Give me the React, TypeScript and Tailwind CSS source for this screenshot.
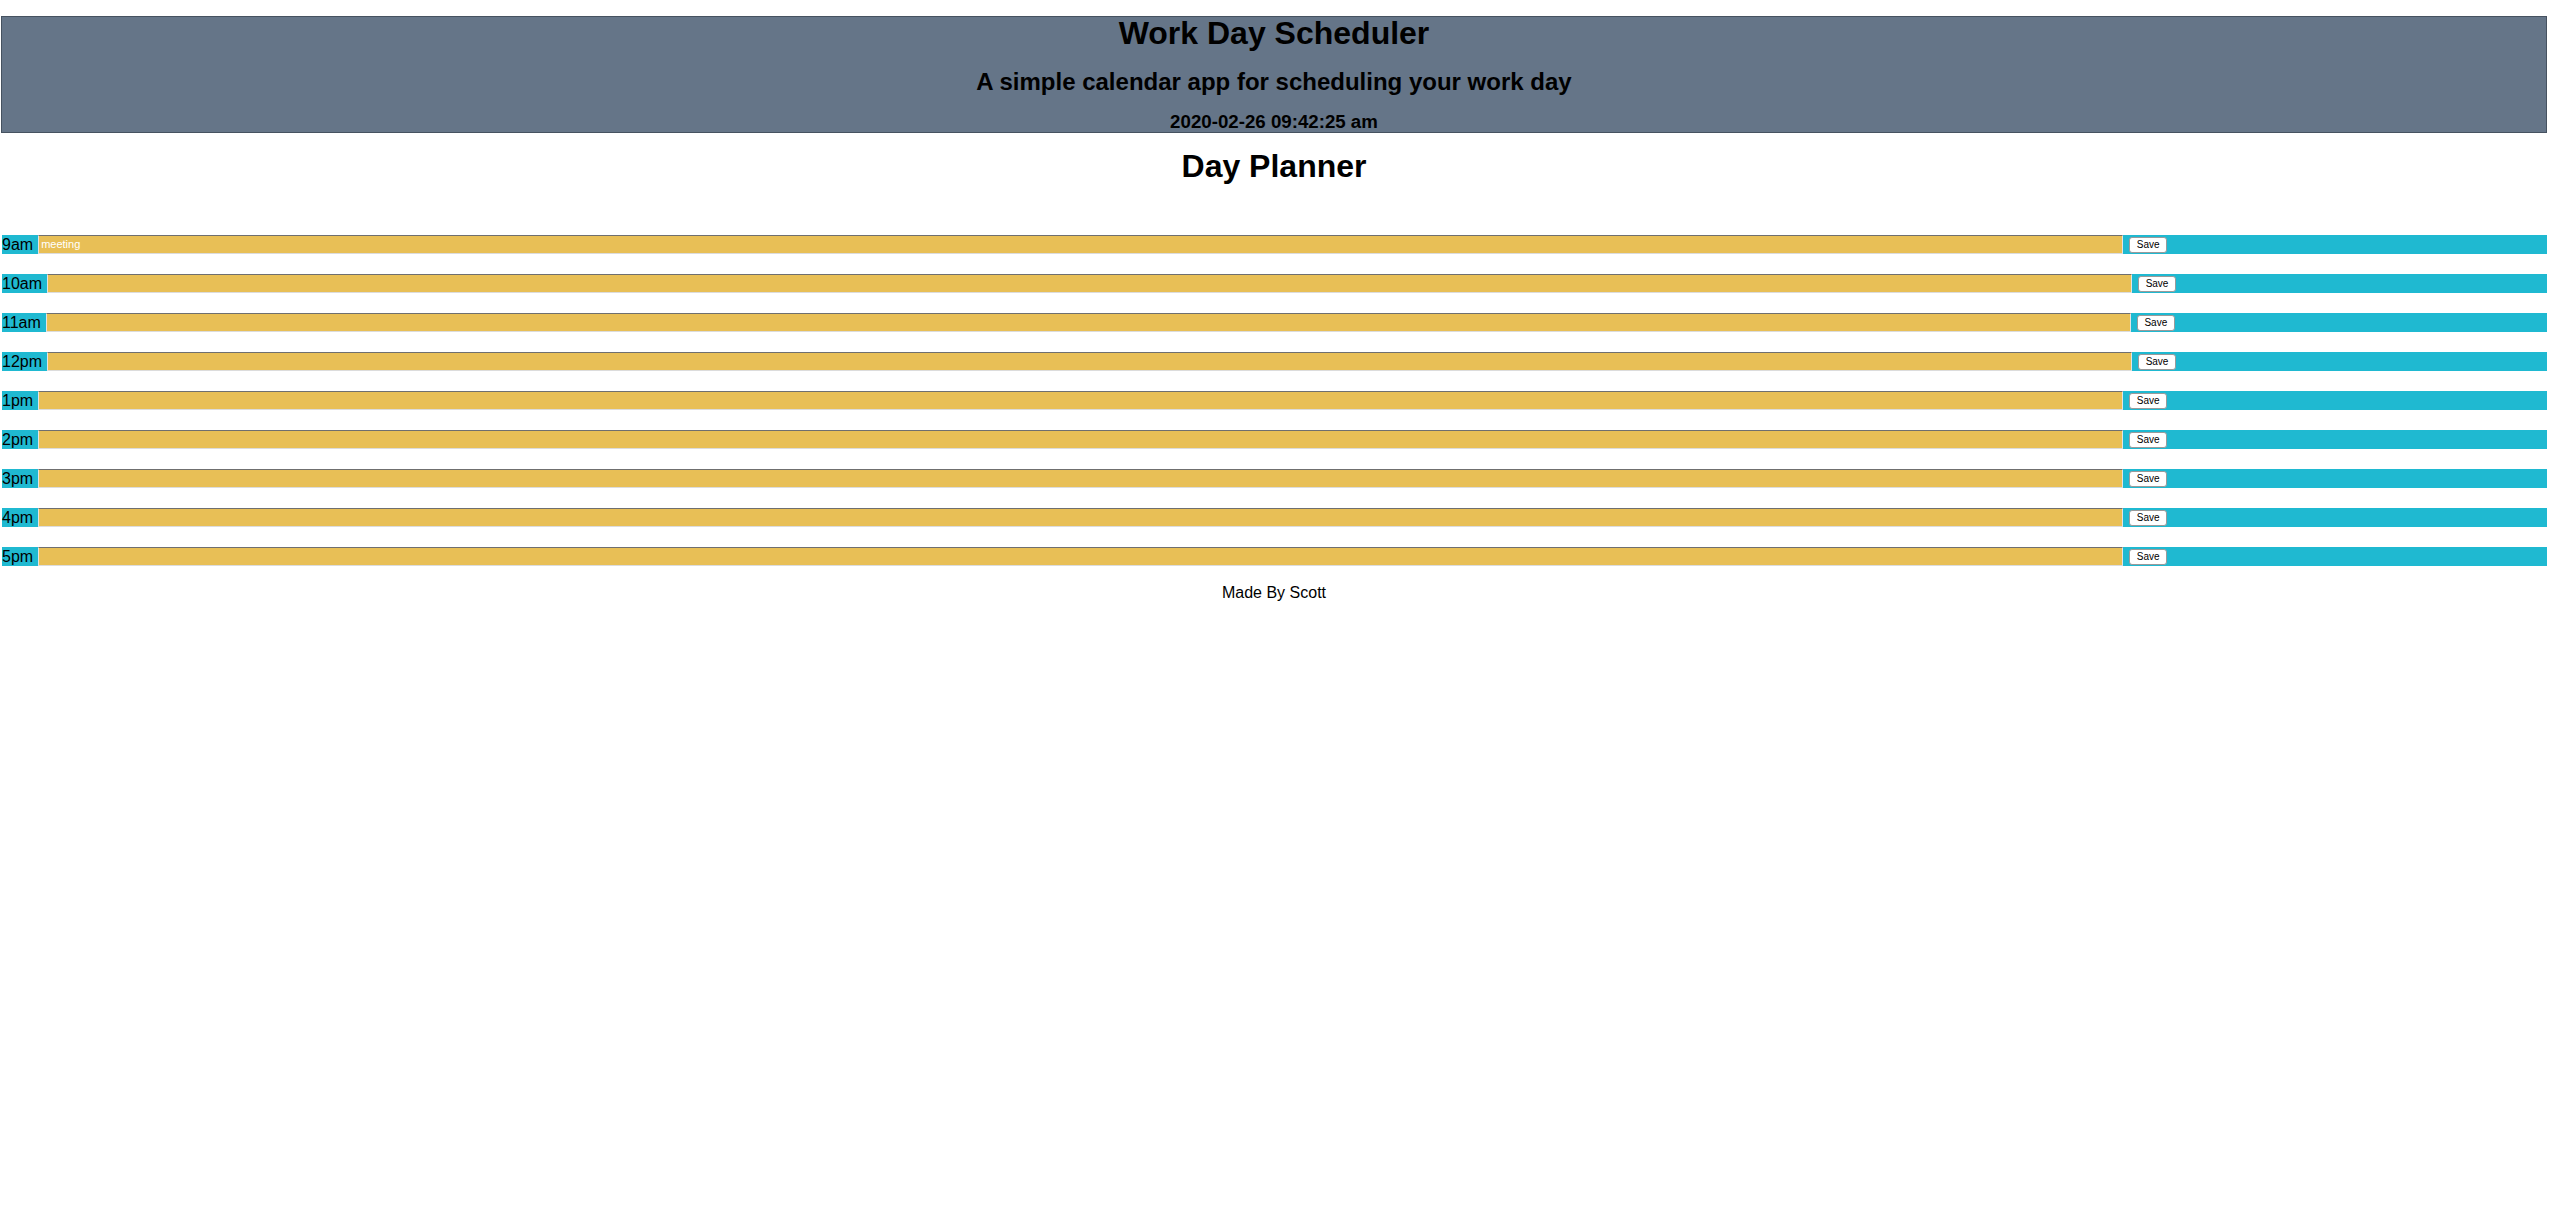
const hours = [
  { label: "9am", text: "meeting" },
  { label: "10am", text: "" },
  { label: "11am", text: "" },
  { label: "12pm", text: "" },
  { label: "1pm", text: "" },
  { label: "2pm", text: "" },
  { label: "3pm", text: "" },
  { label: "4pm", text: "" },
  { label: "5pm", text: "" },
];

function HourRow({ label, text }: { label: string; text: string }) {
  return (
    <div className="flex h-[19px] items-stretch bg-[#1fb9d1] ml-px">
      <span className="pr-[5px] text-[16px] leading-[19px] text-black">{label}</span>
      <textarea
        defaultValue={text}
        rows={1}
        className="w-[2085px] resize-none overflow-hidden border border-t-[#6f6f6f] border-l-[#e4e4e4] border-r-[#e4e4e4] border-b-[#dcdcdc] bg-[#e8bf56] px-[2px] text-[11px] leading-[16px] text-white outline-none"
      />
      <button className="ml-[6px] my-auto h-[16px] w-[38px] rounded-[3px] border border-[#9a9a9a] bg-white text-[10px] leading-[14px] text-black">
        Save
      </button>
    </div>
  );
}

export default function App() {
  return (
    <div className="min-h-screen bg-white pt-[16px] pl-px pr-[3px] text-black font-['Liberation_Sans',Arial,sans-serif]">
      <header className="border border-[#465260] bg-[#657588] text-center">
        <h1 className="text-[32px] leading-[32px] font-bold">Work Day Scheduler</h1>
        <h2 className="mt-[19px] text-[24px] leading-[28px] font-bold">
          A simple calendar app for scheduling your work day
        </h2>
        <h3 className="mt-[15px] text-[18.7px] leading-[21px] font-bold">2020-02-26 09:42:25 am</h3>
      </header>

      <h1 className="mt-[15px] text-center text-[32px] leading-[37px] font-bold">Day Planner</h1>

      <div className="mt-[50px] flex flex-col gap-[20px]">
        {hours.map((h) => (
          <HourRow key={h.label} label={h.label} text={h.text} />
        ))}
      </div>

      <footer className="mt-[18px] text-center text-[16px] leading-[18px]">Made By Scott</footer>
    </div>
  );
}
